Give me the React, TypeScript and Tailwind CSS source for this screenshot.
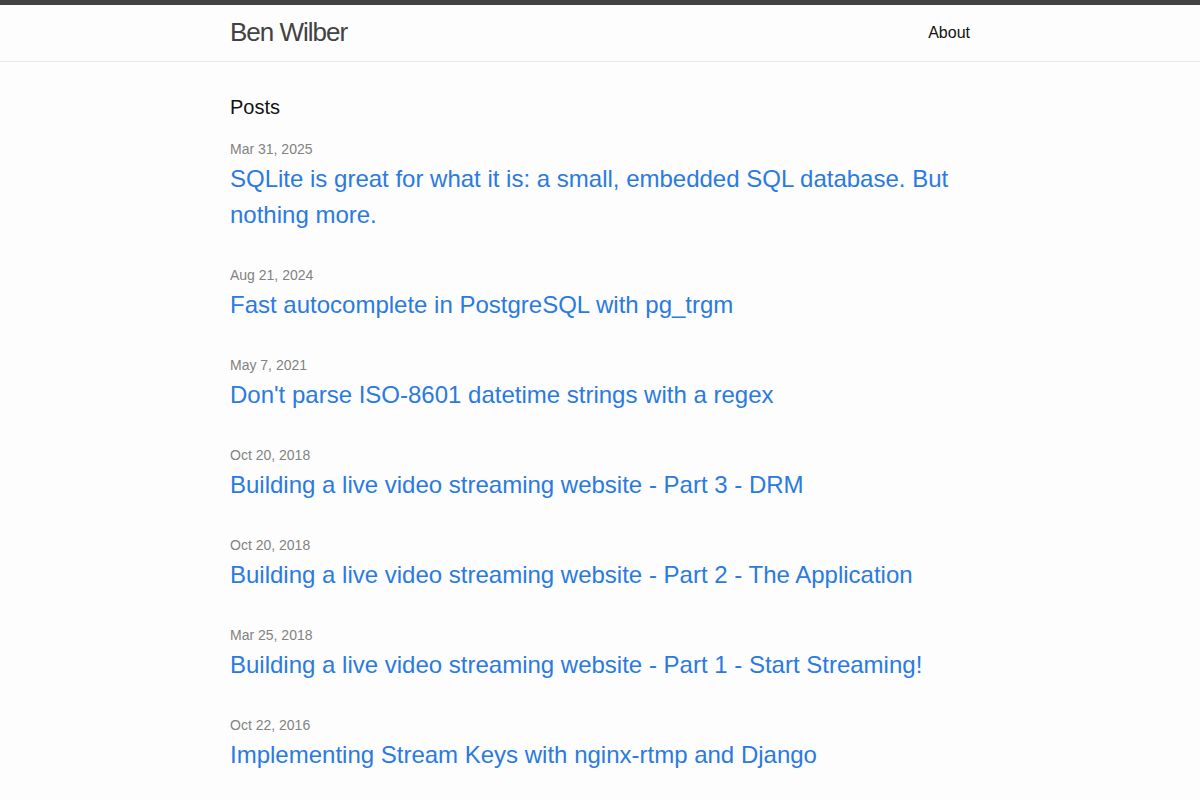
import React from "react";

const posts: { date: string; title: string }[] = [
  { date: "Mar 31, 2025", title: "SQLite is great for what it is: a small, embedded SQL database. But nothing more." },
  { date: "Aug 21, 2024", title: "Fast autocomplete in PostgreSQL with pg_trgm" },
  { date: "May 7, 2021", title: "Don't parse ISO-8601 datetime strings with a regex" },
  { date: "Oct 20, 2018", title: "Building a live video streaming website - Part 3 - DRM" },
  { date: "Oct 20, 2018", title: "Building a live video streaming website - Part 2 - The Application" },
  { date: "Mar 25, 2018", title: "Building a live video streaming website - Part 1 - Start Streaming!" },
  { date: "Oct 22, 2016", title: "Implementing Stream Keys with nginx-rtmp and Django" },
];

export default function App() {
  return (
    <div
      className="min-h-screen bg-[#fdfdfd] text-[#111111] text-[16px] leading-[1.5]"
      style={{ fontFamily: '"Liberation Sans", Arial, Helvetica, sans-serif' }}
    >
      <header className="border-t-[5px] border-t-[#424242] border-b border-b-[#e8e8e8] min-h-[62px]">
        <div className="max-w-[800px] mx-auto px-[30px] flex justify-between items-start">
          <a className="text-[26px] font-light tracking-[-1px] leading-[54px] text-[#424242]">Ben Wilber</a>
          <nav className="leading-[54px] pt-px">
            <a className="text-[#111111] text-[16px]">About</a>
          </nav>
        </div>
      </header>
      <main className="py-[30px]">
        <div className="max-w-[800px] mx-auto px-[30px]">
          <h2 className="text-[20px] leading-[30px] mb-[15px]">Posts</h2>
          <ul>
            {posts.map((p, i) => (
              <li key={i} className="mb-[30px]">
                <span className="text-[14px] text-[#828282]">{p.date}</span>
                <h3>
                  <a className="block text-[24px] leading-[36px] text-[#2a7ae2]">{p.title}</a>
                </h3>
              </li>
            ))}
          </ul>
        </div>
      </main>
    </div>
  );
}
